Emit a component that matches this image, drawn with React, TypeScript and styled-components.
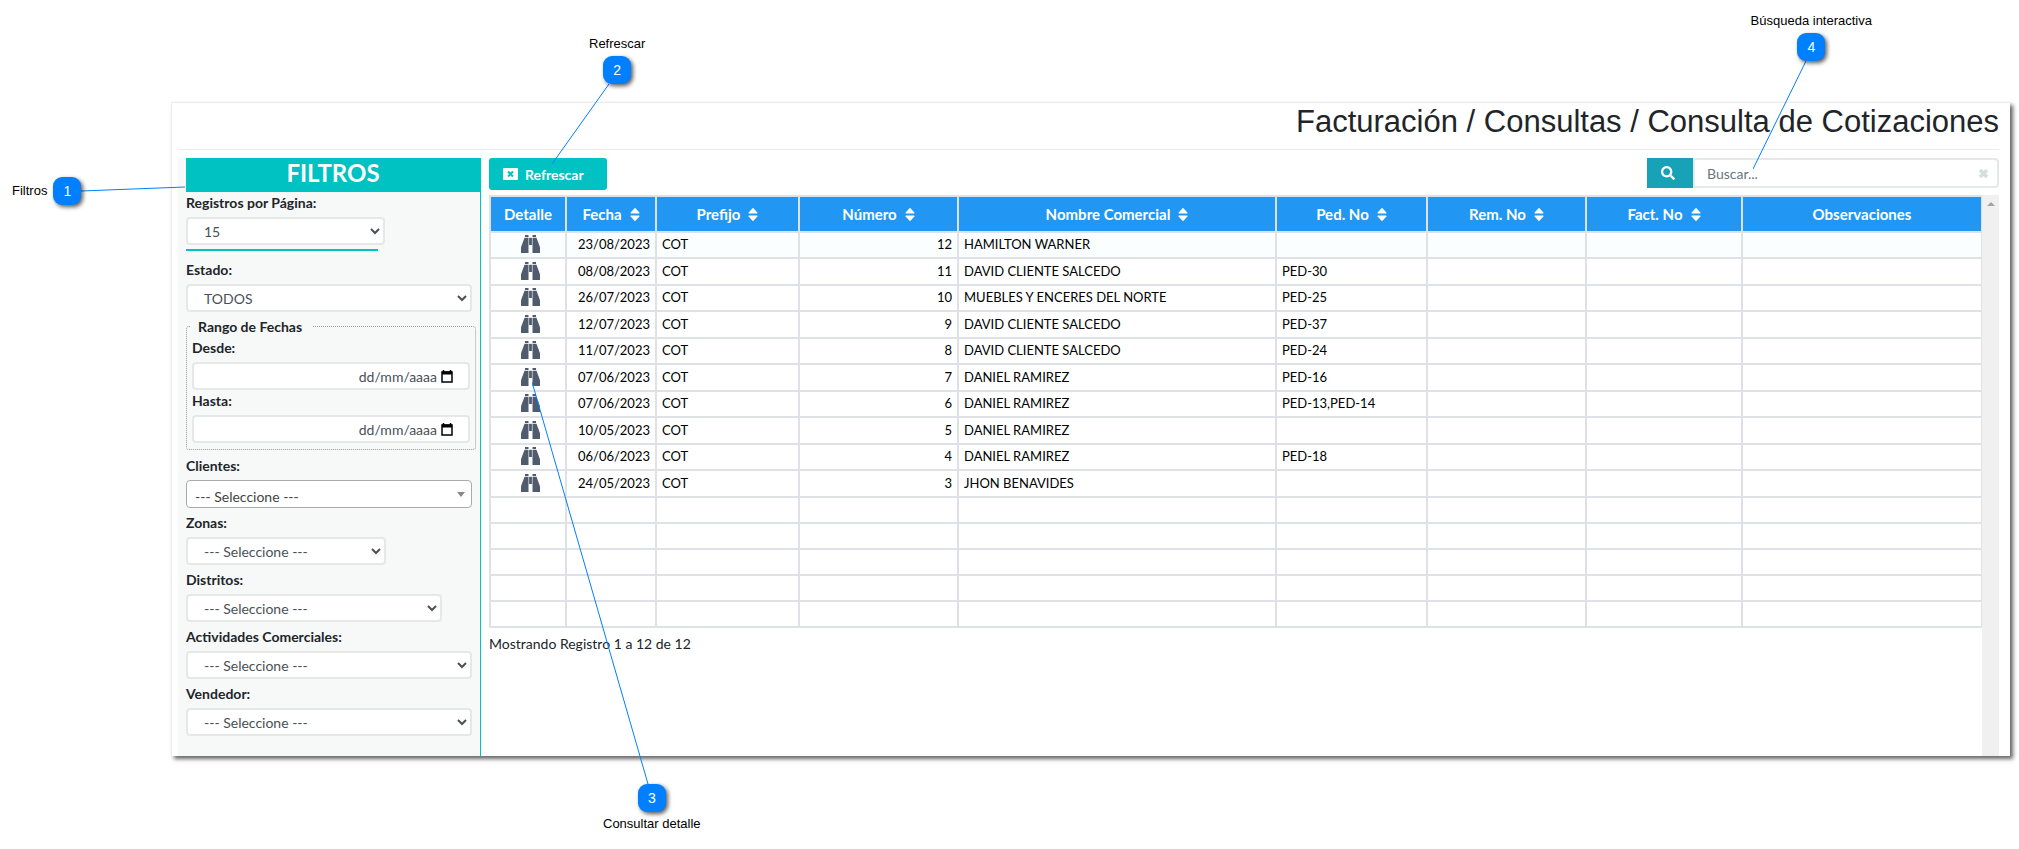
import React from "react";
import styled, { createGlobalStyle } from "styled-components";
import { FaSearch } from "react-icons/fa";

const TEAL = "#00c2c3";
const BLUE = "#2196f3";
const PIN = "#007fff";
const LINE = "#dee2e6";
const FIELD_LINE = "#e4e8e8";

const GlobalStyle = createGlobalStyle`
  *, *::before, *::after { box-sizing: border-box; }
  body {
    margin: 0;
    background: #fff;
    color: #212529;
    font-family: Lato, "Liberation Sans", sans-serif;
    font-size: 14px;
    line-height: 21px;
  }
  button, input, select { font: inherit; }
`;

const Page = styled.main`
  position: relative;
  padding: 102px 9px 93px 171px;
`;

const Window = styled.section`
  display: flex;
  flex-direction: column;
  min-height: 654px;
  padding: 0 11px 0 6px;
  border-top: 1px solid #ececec;
  border-left: 1px solid #ececec;
  box-shadow: 3px 3px 4px rgba(0, 0, 0, 0.6);
`;

const Title = styled.h1`
  margin: 0 0 8px;
  padding: 0 0 8px;
  border-bottom: 1px solid #ececec;
  font-family: "Liberation Sans", Arial, sans-serif;
  font-size: 31px;
  font-weight: 400;
  line-height: 38px;
  text-align: right;
`;

const Body = styled.div`
  display: flex;
  flex: 1;
  gap: 8px;
`;

const Sidebar = styled.aside`
  flex: 0 0 303px;
  padding-left: 8px;
  border-right: 1px solid ${TEAL};
  background: #f7f9f9;
`;

const SidebarTitle = styled.h2`
  margin: 0;
  background: ${TEAL};
  color: #fff;
  font-size: 24px;
  font-weight: 700;
  line-height: 30px;
  padding-bottom: 4px;
  text-align: center;
`;

const Field = styled.div<{ $width?: number }>`
  display: flex;
  flex-direction: column;
  gap: 4px;
  width: ${(p) => p.$width ?? 286}px;
  margin-bottom: 4px;
`;

const Label = styled.label`
  font-weight: 700;
  line-height: 21px;
`;

const Select = styled.select`
  height: 28px;
  padding: 0 0 0 12px;
  border: 2px solid ${FIELD_LINE};
  border-radius: 4px;
  background-color: #fff;
  color: #495057;
`;

const SearchSelectBox = styled.div`
  display: flex;
  align-items: center;
  height: 28px;
  padding-right: 6px;
  border: 1px solid #aaa;
  border-radius: 4px;
  background: #fff;
`;

const SearchSelect = styled.select`
  flex: 1;
  height: 26px;
  padding: 4px 8px 0;
  border: 0;
  background: transparent;
  color: #444;
  appearance: none;
`;

const Caret = styled.span`
  border: 4px solid transparent;
  border-top: 5px solid #888;
  border-bottom: 0;
`;

const Rule = styled.hr`
  width: 192px;
  height: 2px;
  margin: 0 0 8px;
  border: 0;
  background: ${TEAL};
`;

const DateRange = styled.fieldset`
  width: 290px;
  margin: 0 0 5px;
  padding: 0 5px 6px;
  border: 1px dotted #999;
  border-radius: 3px;
`;

const Legend = styled.legend`
  margin-left: -2px;
  padding: 0 11px 0 8px;
  font-weight: 700;
  line-height: 21px;
`;

const DateField = styled.div`
  display: flex;
  flex-direction: column;
  gap: 4px;
`;

const DateBox = styled.div`
  display: flex;
  align-items: center;
  height: 28px;
  padding-right: 15px;
  border: 2px solid ${FIELD_LINE};
  border-radius: 4px;
  background: #fff;
`;

const DateInput = styled.input`
  flex: 1;
  min-width: 0;
  height: 24px;
  padding: 0 4px 0 12px;
  border: 0;
  background: transparent;
  text-align: right;
  &::placeholder { color: #495057; opacity: 1; }
`;

const BareButton = styled.button`
  display: inline-flex;
  align-items: center;
  justify-content: center;
  padding: 0;
  border: 0;
  background: transparent;
  color: inherit;
`;

const Content = styled.div`
  flex: 1;
  min-width: 0;
  display: flex;
  flex-direction: column;
`;

const Toolbar = styled.div`
  display: flex;
  align-items: flex-start;
  justify-content: space-between;
  height: 37px;
`;

const RefreshButton = styled.button`
  display: flex;
  align-items: center;
  gap: 7px;
  width: 118px;
  height: 32px;
  padding: 0 0 0 14px;
  border: 0;
  border-radius: 3px;
  background: ${TEAL};
  color: #fff;
  font-weight: 700;
`;

const SearchGroup = styled.div`
  display: flex;
  width: 352px;
  height: 30px;
`;

const SearchButton = styled(BareButton)`
  width: 46px;
  padding-right: 5px;
  background: #17a2b8;
  color: #fff;
  font-size: 14px;
`;

const SearchBox = styled.div`
  display: flex;
  flex: 1;
  align-items: center;
  padding-right: 8px;
  border: 2px solid ${FIELD_LINE};
  border-radius: 0 4px 4px 0;
  color: #d3dede;
`;

const SearchInput = styled.input`
  flex: 1;
  min-width: 0;
  height: 26px;
  padding: 0 12px;
  border: 0;
  background: transparent;
  &::placeholder { color: #6c757d; opacity: 1; }
`;

const Results = styled.div`
  display: flex;
  flex: 1;
`;

const ResultsMain = styled.div`
  flex: 1;
  min-width: 0;
`;

const ScrollTrack = styled.div`
  display: flex;
  justify-content: center;
  flex: 0 0 17px;
  padding-top: 7px;
  background: #f0f0f0;
`;

const ScrollArrow = styled.span`
  height: 4px;
  border: 4px solid transparent;
  border-bottom-color: #a3a3a3;
  border-top: 0;
`;

const Table = styled.table`
  width: 100%;
  table-layout: fixed;
  border-collapse: collapse;
  color: #000;
  font-size: 13px;
  line-height: 20px;
`;

const HeadCell = styled.th`
  height: 36px;
  padding: 0;
  border: 2px solid ${LINE};
  background: ${BLUE};
  color: #fff;
  font-size: 15px;
  font-weight: 700;
`;

const HeadContent = styled.span`
  display: inline-flex;
  align-items: center;
  gap: 8px;
`;

const Row = styled.tr`
  height: 26px;
  &:first-child { background: #fafefe; }
  &:nth-child(even):not(:nth-child(n + 11)) { height: 27px; }
`;

const Cell = styled.td<{ $align?: "left" | "right" | "center" }>`
  padding: 0 5px 2px;
  border: 2px solid ${LINE};
  text-align: ${(p) => p.$align ?? "left"};
  white-space: nowrap;
`;

const DetailButton = styled(BareButton)`
  display: flex;
  width: 100%;
  padding-left: 4px;
  color: #505b6d;
`;

const Status = styled.p`
  margin: 5px 0 0;
`;

const Callout = styled.div<{ $x: number; $y: number; $fromRight?: boolean; $layout: "row" | "column" | "column-reverse" }>`
  position: absolute;
  top: ${(p) => p.$y}px;
  ${(p) => (p.$fromRight ? "right" : "left")}: ${(p) => p.$x}px;
  display: flex;
  flex-direction: ${(p) => p.$layout};
  align-items: center;
  gap: ${(p) => (p.$layout === "row" ? 6 : 4)}px;
  color: #000;
  font-family: "Liberation Sans", Arial, sans-serif;
  font-size: 13px;
  line-height: 16px;
`;

const Badge = styled.span`
  width: 28px;
  height: 28px;
  border-radius: 9px;
  background: ${PIN};
  box-shadow: 2px 2px 4px rgba(0, 0, 0, 0.65);
  color: #fff;
  font-size: 14px;
  line-height: 28px;
  text-align: center;
`;

const Leader = styled.svg<{ $x: number; $y: number; $fromRight?: boolean }>`
  position: absolute;
  top: ${(p) => p.$y}px;
  ${(p) => (p.$fromRight ? "right" : "left")}: ${(p) => p.$x}px;
  stroke: ${PIN};
  pointer-events: none;
`;

const columns = [
  { name: "Detalle", width: 76, sortable: false },
  { name: "Fecha", width: 90, sortable: true },
  { name: "Prefijo", width: 143, sortable: true },
  { name: "Número", width: 159, sortable: true },
  { name: "Nombre Comercial", width: 318, sortable: true },
  { name: "Ped. No", width: 151, sortable: true },
  { name: "Rem. No", width: 159, sortable: true },
  { name: "Fact. No", width: 156, sortable: true },
  { name: "Observaciones", width: 240, sortable: false },
];

const quotes = [
  ["23/08/2023", "12", "HAMILTON WARNER", ""],
  ["08/08/2023", "11", "DAVID CLIENTE SALCEDO", "PED-30"],
  ["26/07/2023", "10", "MUEBLES Y ENCERES DEL NORTE", "PED-25"],
  ["12/07/2023", "9", "DAVID CLIENTE SALCEDO", "PED-37"],
  ["11/07/2023", "8", "DAVID CLIENTE SALCEDO", "PED-24"],
  ["07/06/2023", "7", "DANIEL RAMIREZ", "PED-16"],
  ["07/06/2023", "6", "DANIEL RAMIREZ", "PED-13,PED-14"],
  ["10/05/2023", "5", "DANIEL RAMIREZ", ""],
  ["06/06/2023", "4", "DANIEL RAMIREZ", "PED-18"],
  ["24/05/2023", "3", "JHON BENAVIDES", ""],
];

const emptyRows = [0, 1, 2, 3, 4];

function BinocularsIcon() {
  return (
    <svg width="19" height="18" viewBox="0 0 19 18" fill="currentColor">
      <path d="M4 0h3.5v2H4zM11.5 0H15v2h-3.5z" />
      <path d="M3.5 2.8h4V18H.6q-.6 0-.6-.6v-4.2q0-.7.2-1.4z" />
      <path d="M15.500 2.800h-4V18h6.900q.6 0 .6-.6v-4.200q0-.7-.2-1.400z" />
      <path d="M8.100 2.800h2.800V10H8.100z" />
    </svg>
  );
}

function SortIcon() {
  return (
    <svg width="10" height="13" viewBox="0 0 10 13" fill="currentColor">
      <path d="M5 0q.3 0 .5.200L9.400 4.400q.4.900-.5 1.100H1.100Q.2 5.300.600 4.400L4.500.200Q4.700 0 5 0z" />
      <path d="M5 13q.3 0 .5-.2L9.400 8.600q.4-.9-.5-1.100H1.100Q.2 7.700.600 8.600L4.500 12.800Q4.700 13 5 13z" />
    </svg>
  );
}

function SelectField({ id, label, value, width }: { id: string; label: string; value: string; width?: number }) {
  return (
    <Field $width={width}>
      <Label htmlFor={id}>{label}</Label>
      <Select id={id}>
        <option>{value}</option>
      </Select>
    </Field>
  );
}

function DateEntry({ id, label }: { id: string; label: string }) {
  return (
    <DateField>
      <Label htmlFor={id}>{label}</Label>
      <DateBox>
        <DateInput id={id} type="text" placeholder="dd/mm/aaaa" />
        <BareButton type="button" aria-label="Abrir calendario">
          <svg width="12" height="13" viewBox="0 0 12 13">
            <path d="M2.500 0v2M9.500 0v2" stroke="#000" strokeWidth="1.500" />
            <rect x="1" y="2" width="10" height="10" fill="none" stroke="#000" strokeWidth="1.500" />
            <rect x="1" y="1.500" width="10" height="3" fill="#000" />
          </svg>
        </BareButton>
      </DateBox>
    </DateField>
  );
}

export default function App() {
  return (
    <Page>
      <GlobalStyle />
      <Window>
        <Title>Facturación / Consultas / Consulta de Cotizaciones</Title>
        <Body>
          <Sidebar>
            <SidebarTitle>FILTROS</SidebarTitle>
            <SelectField id="registros" label="Registros por Página:" value="15" width={199} />
            <Rule />
            <SelectField id="estado" label="Estado:" value="TODOS" />
            <DateRange>
              <Legend>Rango de Fechas</Legend>
              <DateEntry id="desde" label="Desde:" />
              <DateEntry id="hasta" label="Hasta:" />
            </DateRange>
            <Field>
              <Label htmlFor="clientes">Clientes:</Label>
              <SearchSelectBox>
                <SearchSelect id="clientes">
                  <option>--- Seleccione ---</option>
                </SearchSelect>
                <Caret />
              </SearchSelectBox>
            </Field>
            <SelectField id="zonas" label="Zonas:" value="--- Seleccione ---" width={200} />
            <SelectField id="distritos" label="Distritos:" value="--- Seleccione ---" width={256} />
            <SelectField id="actividades" label="Actividades Comerciales:" value="--- Seleccione ---" />
            <SelectField id="vendedor" label="Vendedor:" value="--- Seleccione ---" />
          </Sidebar>
          <Content>
            <Toolbar>
              <RefreshButton type="button">
                <svg width="15" height="12" viewBox="0 0 15 12">
                  <rect width="15" height="12" rx="1" fill="#fff" />
                  <path d="M5 3.500l5 5M10 3.500l-5 5" stroke={TEAL} strokeWidth="2" />
                </svg>
                Refrescar
              </RefreshButton>
              <SearchGroup>
                <SearchButton type="button" aria-label="Buscar">
                  <FaSearch />
                </SearchButton>
                <SearchBox>
                  <SearchInput type="text" aria-label="Buscar" placeholder="Buscar..." />
                  <BareButton type="button" aria-label="Limpiar">
                    <svg width="11" height="11" viewBox="0 0 11 11">
                      <path d="M2 2l7 7M9 2l-7 7" stroke="currentColor" strokeWidth="3.400" />
                    </svg>
                  </BareButton>
                </SearchBox>
              </SearchGroup>
            </Toolbar>
            <Results>
              <ResultsMain>
                <Table>
                  <colgroup>
                    {columns.map((c) => (
                      <col key={c.name} style={{ width: c.width }} />
                    ))}
                  </colgroup>
                  <thead>
                    <tr>
                      {columns.map((c) => (
                        <HeadCell key={c.name} scope="col">
                          <HeadContent>
                            {c.name}
                            {c.sortable && <SortIcon />}
                          </HeadContent>
                        </HeadCell>
                      ))}
                    </tr>
                  </thead>
                  <tbody>
                    {quotes.map(([date, number, client, order]) => (
                      <Row key={number}>
                        <Cell $align="center">
                          <DetailButton type="button" aria-label={`Detalle ${number}`}>
                            <BinocularsIcon />
                          </DetailButton>
                        </Cell>
                        <Cell $align="right">{date}</Cell>
                        <Cell>COT</Cell>
                        <Cell $align="right">{number}</Cell>
                        <Cell>{client}</Cell>
                        <Cell>{order}</Cell>
                        <Cell />
                        <Cell />
                        <Cell />
                      </Row>
                    ))}
                    {emptyRows.map((n) => (
                      <Row key={`empty-${n}`}>
                        {columns.map((c) => (
                          <Cell key={c.name} />
                        ))}
                      </Row>
                    ))}
                  </tbody>
                </Table>
                <Status>Mostrando Registro 1 a 12 de 12</Status>
              </ResultsMain>
              <ScrollTrack>
                <ScrollArrow />
              </ScrollTrack>
            </Results>
          </Content>
        </Body>
      </Window>

      <Leader $x={81} $y={186} width="104" height="6">
        <line x1="0" y1="5" x2="104" y2="1" />
      </Leader>
      <Leader $x={552} $y={84} width="57" height="80">
        <line x1="57" y1="0" x2="0" y2="80" />
      </Leader>
      <Leader $x={532} $y={382} width="117" height="402">
        <line x1="0" y1="0" x2="116" y2="402" />
      </Leader>
      <Leader $x={213} $y={61} $fromRight width="53" height="108">
        <line x1="53" y1="0" x2="0" y2="108" />
      </Leader>

      <Callout $x={12} $y={177} $layout="row">
        Filtros<Badge>1</Badge>
      </Callout>
      <Callout $x={589} $y={36} $layout="column">
        Refrescar<Badge>2</Badge>
      </Callout>
      <Callout $x={603} $y={784} $layout="column-reverse">
        Consultar detalle<Badge>3</Badge>
      </Callout>
      <Callout $x={147} $y={13} $fromRight $layout="column">
        Búsqueda interactiva<Badge>4</Badge>
      </Callout>
    </Page>
  );
}
